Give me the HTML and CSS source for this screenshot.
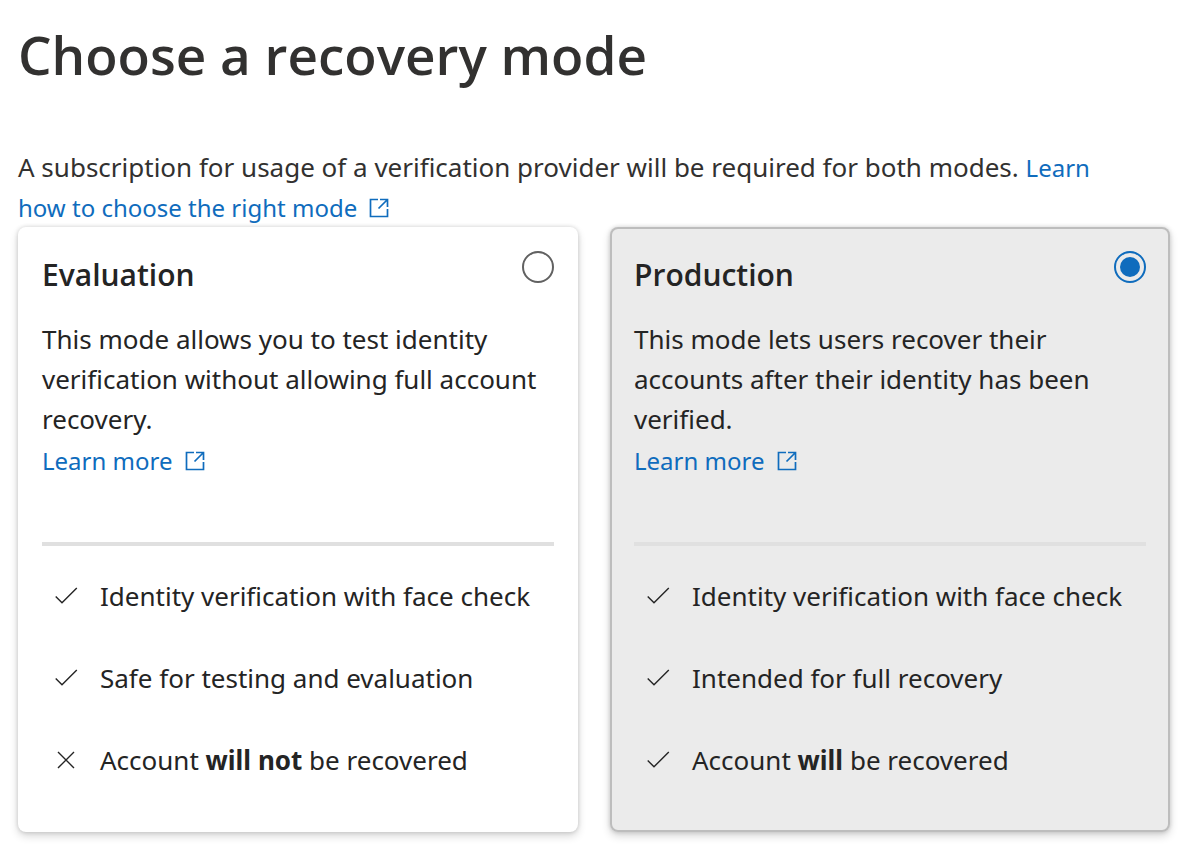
FILE: index.html
```html
<!DOCTYPE html>
<html lang="en">
<head>
  <meta charset="UTF-8">
  <meta name="viewport" content="width=device-width, initial-scale=1.0">
  <title>Choose a recovery mode</title>
  <link rel="stylesheet" href="styles.css">
</head>

<body>
  <main class="page">
    <h1>Choose a recovery mode</h1>
    <p class="intro">A subscription for usage of a verification provider will be required for both modes.
      <a href="#choose">Learn how to choose the right mode<svg class="open" viewBox="0 0 20 20"><path d="M9 1.500H1.500V18.500H18.500V11M11 1.500H18.500V9M18 2L9.500 10.500" /></svg></a></p>

    <div class="modes">
      <section class="card">
        <div class="card-head">
          <label for="evaluation">Evaluation</label>
          <input type="radio" name="mode" id="evaluation">
        </div>
        <p class="text">This mode allows you to test identity verification without allowing full account recovery.</p>
        <a class="more" href="#evaluation">Learn more<svg class="open" viewBox="0 0 20 20"><path d="M9 1.500H1.500V18.500H18.500V11M11 1.500H18.500V9M18 2L9.500 10.500" /></svg></a>
        <ul>
          <li><svg class="mark" viewBox="0 0 24 24"><path d="M1.700 12.500L8 18.800L22.800 4" /></svg><span>Identity verification with face check</span></li>
          <li><svg class="mark" viewBox="0 0 24 24"><path d="M1.700 12.500L8 18.800L22.800 4" /></svg><span>Safe for testing and evaluation</span></li>
          <li><svg class="mark" viewBox="0 0 24 24"><path d="M4 4L20 20M20 4L4 20" /></svg><span>Account <b>will not</b> be recovered</span></li>
        </ul>
      </section>

      <section class="card selected">
        <div class="card-head">
          <label for="production">Production</label>
          <input type="radio" name="mode" id="production" checked>
        </div>
        <p class="text">This mode lets users recover their accounts after their identity has been verified.</p>
        <a class="more" href="#production">Learn more<svg class="open" viewBox="0 0 20 20"><path d="M9 1.500H1.500V18.500H18.500V11M11 1.500H18.500V9M18 2L9.500 10.500" /></svg></a>
        <ul>
          <li><svg class="mark" viewBox="0 0 24 24"><path d="M1.700 12.500L8 18.800L22.800 4" /></svg><span>Identity verification with face check</span></li>
          <li><svg class="mark" viewBox="0 0 24 24"><path d="M1.700 12.500L8 18.800L22.800 4" /></svg><span>Intended for full recovery</span></li>
          <li><svg class="mark" viewBox="0 0 24 24"><path d="M1.700 12.500L8 18.800L22.800 4" /></svg><span>Account <b>will</b> be recovered</span></li>
        </ul>
      </section>
    </div>
  </main>
</body>

</html>
```
FILE: styles.css
```css
* {
  box-sizing: border-box;
}

body {
  margin: 0;
  background-color: white;
  color: #242424;
  font-family: "Noto Sans", "Open Sans", sans-serif;
  font-size: 26px;
  line-height: 40px;
}

.page {
  padding: 19px 32px 24px 18px;
}

h1 {
  margin: 0 0 56px;
  color: #323130;
  font-family: "Open Sans", sans-serif;
  font-size: 53px;
  font-weight: 600;
  line-height: 72px;
}

p {
  margin: 0;
}

.intro {
  padding-right: 32px;
  color: #323130;
}

.intro a {
  line-height: 32px;
}

a {
  color: #0f6cbd;
  font-size: 24px;
  text-decoration: none;
}

svg {
  fill: none;
  stroke: currentColor;
}

.open {
  width: 20px;
  height: 20px;
  margin-left: 12px;
  stroke-width: 1.7;
  vertical-align: -1px;
}

.modes {
  display: grid;
  grid-template-columns: 1fr 1fr;
  gap: 32px;
}

.card {
  padding: 24px;
  border-radius: 8px;
  box-shadow: 0 0 4px rgba(0, 0, 0, 0.16), 0 4px 8px rgba(0, 0, 0, 0.16);
}

.selected {
  background-color: #ebebeb;
  box-shadow: inset 0 0 0 2px #bdbdbd, 0 0 4px rgba(0, 0, 0, 0.16), 0 4px 8px rgba(0, 0, 0, 0.16);
}

.card-head {
  display: flex;
  justify-content: space-between;
  align-items: flex-start;
  margin-bottom: 20px;
}

.card-head label {
  font-family: "Open Sans", sans-serif;
  font-size: 30px;
  font-weight: 600;
  line-height: 48px;
}

input {
  appearance: none;
  width: 32px;
  height: 32px;
  margin: 0;
  border: 2px solid #616161;
  border-radius: 50%;
}

input:checked {
  border-color: #0f6cbd;
  background: #0f6cbd content-box;
  padding: 4px;
}

.text {
  min-height: 120px;
}

.more {
  display: block;
  line-height: 44px;
}

ul {
  display: grid;
  gap: 42px;
  margin: 59px 0 0;
  padding: 30px 0 28px 12px;
  border-top: 4px solid #e0e0e0;
  list-style: none;
}

li {
  display: flex;
  align-items: center;
  gap: 22px;
}

.mark {
  width: 24px;
  height: 24px;
  stroke-width: 1.4;
}
```
